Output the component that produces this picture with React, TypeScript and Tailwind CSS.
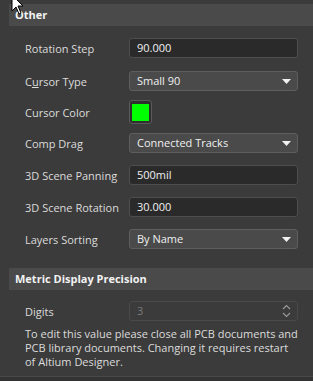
import React from "react";

const font = { fontFamily: '"Segoe UI", "Open Sans", "Noto Sans", sans-serif' };

function Label({ children }: { children: React.ReactNode }) {
  return <div className="w-[104px] shrink-0 text-[11px] text-[#dcdcdc] leading-none">{children}</div>;
}

function TextInput({ value }: { value: string }) {
  return (
    <div className="flex-1 h-[20px] rounded-[3px] bg-[#2a2a2a] border border-[#4e4e4e] flex items-center px-[7px] text-[11px] text-[#f0f0f0]">
      {value}
    </div>
  );
}

function Select({ value }: { value: string }) {
  return (
    <div className="flex-1 h-[20px] rounded-[3px] bg-[#4a4a4a] border border-[#5e5e5e] flex items-center justify-between pl-[7px] pr-[6px] text-[11px] text-[#f0f0f0]">
      <span>{value}</span>
      <svg width="9" height="5" viewBox="0 0 9 5">
        <path d="M0 0 L9 0 L4.5 5 Z" fill="#f2f2f2" />
      </svg>
    </div>
  );
}

function Row({ label, children, className = "" }: { label: React.ReactNode; children: React.ReactNode; className?: string }) {
  return (
    <div className={"flex items-center pl-[25px] pr-[15px] " + className}>
      <Label>{label}</Label>
      {children}
    </div>
  );
}

export default function App() {
  return (
    <div className="relative w-[313px] h-[381px] bg-[#3b3b3b] overflow-hidden" style={font}>
      <div className="h-[4px]" />
      <div className="ml-[9px] h-[22px] bg-[#4a4a4a] flex items-center pl-[6px] text-[11px] font-bold text-[#f2f2f2]">
        Other
      </div>
      <div className="flex flex-col pt-[12px]">
        <Row label="Rotation Step">
          <TextInput value="90.000" />
        </Row>
        <Row label={<span>C<span className="underline">u</span>rsor Type</span>} className="mt-[13px]">
          <Select value="Small 90" />
        </Row>
        <Row label="Cursor Color" className="mt-[9px]">
          <div className="w-[23px] h-[24px] rounded-[3px] border border-[#5a5a5a] bg-[#2f2f2f] flex items-center justify-center">
            <div className="w-[17px] h-[17px] bg-[#00ff00]" />
          </div>
        </Row>
        <Row label="Comp Drag" className="mt-[9px]">
          <Select value="Connected Tracks" />
        </Row>
        <Row label="3D Scene Panning" className="mt-[12px]">
          <TextInput value="500mil" />
        </Row>
        <Row label="3D Scene Rotation" className="mt-[12px]">
          <TextInput value="30.000" />
        </Row>
        <Row label="Layers Sorting" className="mt-[12px]">
          <Select value="By Name" />
        </Row>
      </div>
      <div className="mt-[19px] ml-[9px] h-[22px] bg-[#4a4a4a] flex items-center pl-[6px] text-[11px] font-bold text-[#f2f2f2]">
        Metric Display Precision
      </div>
      <Row label="Digits" className="mt-[11px]">
        <div className="flex-1 h-[20px] rounded-[3px] bg-[#3b3b3b] border border-[#4a4a4a] flex items-center justify-between pl-[7px] pr-[6px] text-[11px] text-[#7a7a7a]">
          <span>3</span>
          <svg width="9" height="14" viewBox="0 0 9 14">
            <path d="M1 5 L4.5 1.5 L8 5" stroke="#9a9a9a" strokeWidth="1.1" fill="none" />
            <path d="M1 9 L4.5 12.5 L8 9" stroke="#9a9a9a" strokeWidth="1.1" fill="none" />
          </svg>
        </div>
      </Row>
      <p className="mt-[6px] pl-[25px] pr-[12px] text-[11px] leading-[14px] text-[#dcdcdc]">
        To edit this value please close all PCB documents and PCB library documents. Changing it requires restart of Altium Designer.
      </p>
      <div className="absolute left-0 right-0 bottom-0 h-[5px] bg-[#333333] border-t border-[#4a4a4a]" />
      <svg className="absolute left-[11px] top-[-6px]" width="14" height="22" viewBox="0 0 14 22">
        <path d="M1 1 L1 17 L5 13 L8 20 L10 19 L7 12 L12 12 Z" fill="#ffffff" stroke="#000000" strokeWidth="1" />
      </svg>
    </div>
  );
}
